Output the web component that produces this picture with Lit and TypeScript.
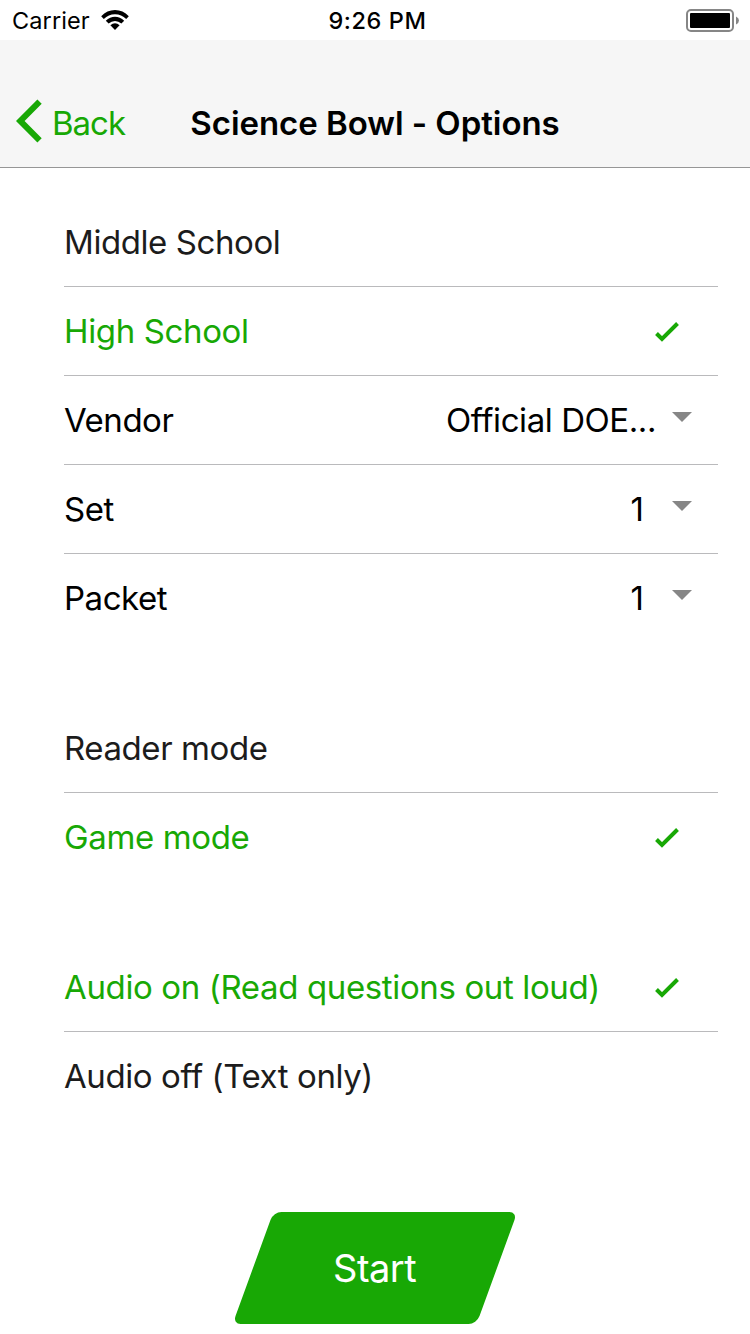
import { LitElement, html, css } from "lit";
import { customElement, property } from "lit/decorators.js";

@customElement("status-bar")
class StatusBar extends LitElement {
  static styles = css`
    :host {
      display: grid;
      grid-template-columns: 1fr auto 1fr;
      align-items: center;
      height: 40px;
      background: #fff;
      color: #000;
      font-size: 23.5px;
      line-height: 38px;
    }
    .left { display: flex; align-items: center; gap: 11px; padding-left: 12px; }
    .carrier { letter-spacing: 0.1px; padding-top: 2px; }
    .time { font-weight: 500; letter-spacing: 0.6px; padding: 2px 0 0 5px; }
    .right { display: flex; justify-content: flex-end; padding: 2px 10px 0 0; }
    svg { display: block; }
  `;
  render() {
    return html`
      <div class="left">
        <span class="carrier">Carrier</span>
        <svg width="28" height="22" viewBox="1 0 28 22">
          <path d="M1.2 7.2Q7 1 15 1T28.800 7.200L26.200 9.900Q21.500 5.200 15 5.200T3.800 9.900Z" />
          <path d="M5.800 11.800Q10 7.800 15 7.800T24.200 11.800L21.400 14.600Q18.500 11.900 15 11.900T8.600 14.600Z" />
          <path d="M10.400 16.300Q12.500 14.300 15 14.300T19.600 16.300L15 21Z" />
        </svg>
      </div>
      <span class="time">9:26 PM</span>
      <div class="right">
        <svg width="54" height="24" viewBox="0 0 54 24">
          <rect x="1" y="1" width="46" height="21" rx="4" fill="none" stroke="#868686" stroke-width="2" />
          <rect x="4" y="4" width="40" height="15" rx="1" />
          <path d="M50 7.500Q53 8.800 53 11.500T50 15.500Z" fill="#868686" />
        </svg>
      </div>
    `;
  }
}

@customElement("nav-header")
class NavHeader extends LitElement {
  static styles = css`
    :host {
      display: grid;
      grid-template-columns: 1fr auto 1fr;
      align-items: center;
      box-sizing: border-box;
      height: 128px;
      padding-top: 38px;
      border-bottom: 1px solid #969696;
      background: #f6f6f6;
    }
    .back { display: flex; align-items: center; gap: 10px; padding-left: 16px; color: #18a805; font-size: 33px; letter-spacing: -1px; }
    svg { display: block; margin-top: -3px; }
    h1 { margin: 0; color: #000; font-size: 33px; font-weight: 600; letter-spacing: -0.05px; }
  `;
  render() {
    return html`
      <div class="back">
        <svg width="26" height="44" viewBox="0 0 26 44" fill="currentColor">
          <path d="M0 22L21.400 0.500L25.700 4.800L8.600 22L25.700 39.200L21.400 43.500Z" />
        </svg>
        <span>Back</span>
      </div>
      <h1>Science Bowl - Options</h1>
    `;
  }
}

@customElement("option-row")
class OptionRow extends LitElement {
  @property() label = "";
  @property() value = "";
  @property({ type: Boolean, reflect: true }) checked = false;
  @property({ type: Boolean, reflect: true }) select = false;

  static styles = css`
    :host {
      display: flex;
      align-items: center;
      height: 88px;
      color: #1c1c1c;
      font-size: 33px;
      letter-spacing: -0.42px;
    }
    :host([checked]) { color: #18a805; letter-spacing: -0.37px; }
    :host([select]) { color: #000; letter-spacing: -0.48px; }
    .label { flex: 1; }
    .check { margin-right: 39px; margin-top: 2px; }
    .value { min-width: 38px; text-align: center; letter-spacing: -0.43px; }
    .arrow { margin: -6px 26px 0 16px; }
    svg { display: block; }
  `;
  render() {
    return html`
      <span class="label">${this.label}</span>
      ${this.select ? html`<span class="value">${this.value}</span>
        <svg class="arrow" width="20" height="10"><path d="M0 0H20L10 10Z" fill="#868686" /></svg>` : ""}
      ${this.checked ? html`<svg class="check" width="24" height="20" viewBox="0 0 24 20">
        <path d="M1.500 11.500L7 17L22.500 1.500" fill="none" stroke="currentColor" stroke-width="4" /></svg>` : ""}
    `;
  }
}

interface Option { label: string; value?: string; checked?: boolean }

const groups: Option[][] = [
  [
    { label: "Middle School" },
    { label: "High School", checked: true },
    { label: "Vendor", value: "Official DOE..." },
    { label: "Set", value: "1" },
    { label: "Packet", value: "1" },
  ],
  [{ label: "Reader mode" }, { label: "Game mode", checked: true }],
  [{ label: "Audio on (Read questions out loud)", checked: true }, { label: "Audio off (Text only)" }],
];

@customElement("app-root")
class AppRoot extends LitElement {
  static styles = css`
    :host {
      display: block;
      height: 1334px;
      overflow: hidden;
      background: #fff;
      font-family: Inter, "Liberation Sans", sans-serif;
    }
    main { display: flex; flex-direction: column; gap: 62px; padding: 30px 32px 0 64px; }
    .group option-row + option-row { border-top: 1px solid #bababc; }
    .start {
      display: flex;
      align-items: center;
      justify-content: center;
      width: 244px;
      height: 112px;
      margin: 92px auto 0;
      border: 0;
      border-radius: 8px;
      padding: 0;
      background: #18a805;
      color: #fff;
      font: 38px Inter, "Liberation Sans", sans-serif;
      letter-spacing: -0.5px;
      transform: skewX(-20deg);
    }
    .start span { transform: skewX(20deg); padding-right: 1px; }
  `;
  render() {
    return html`
      <status-bar></status-bar>
      <nav-header></nav-header>
      <main>
        ${groups.map((rows) => html`<section class="group">
          ${rows.map((r) => html`<option-row .label=${r.label} .value=${r.value ?? ""} .checked=${!!r.checked} .select=${r.value !== undefined}></option-row>`)}
        </section>`)}
      </main>
      <button class="start"><span>Start</span></button>
    `;
  }
}
